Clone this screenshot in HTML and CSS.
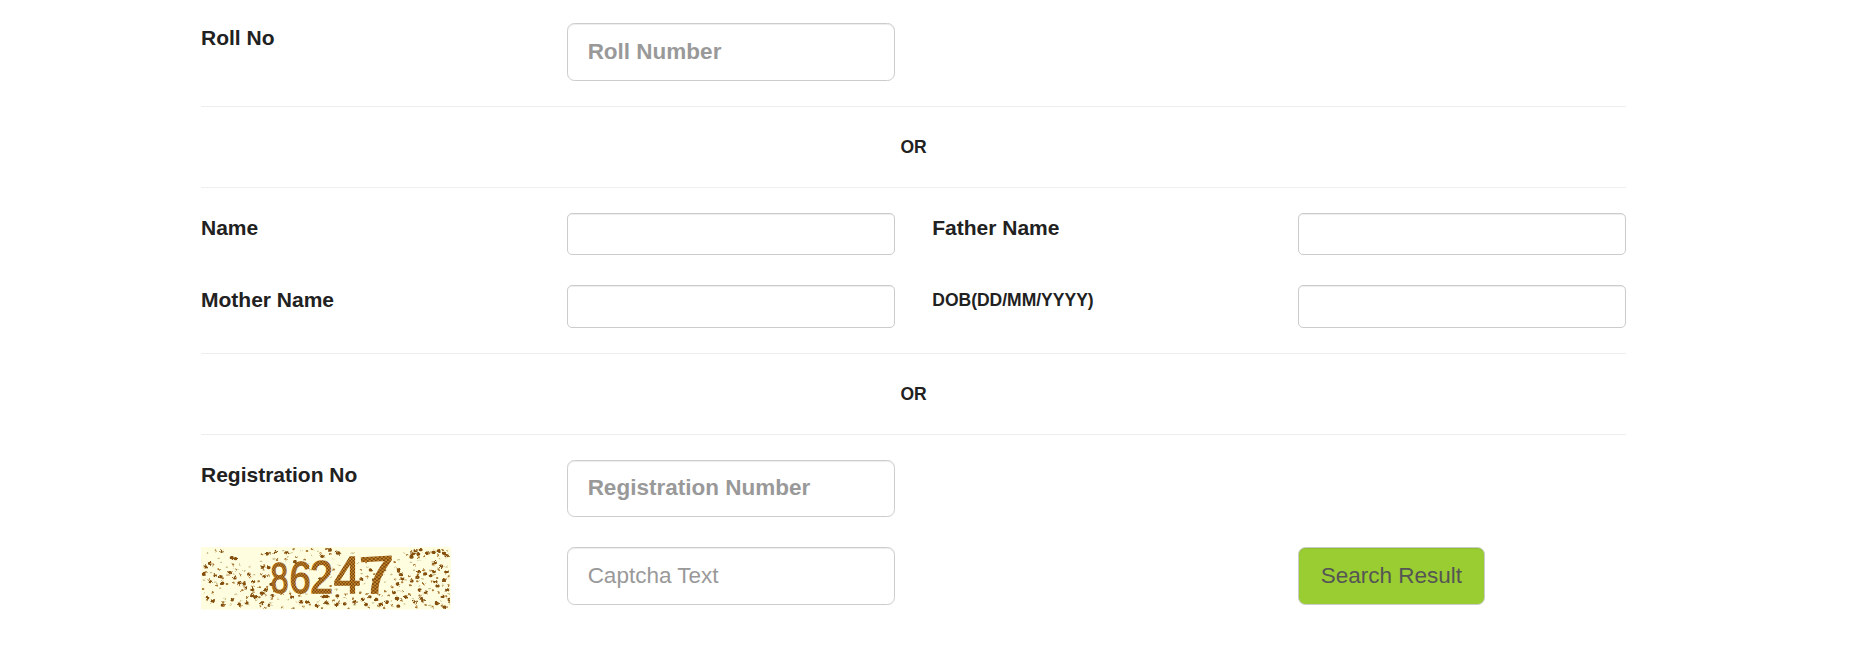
FILE: index.html
```html
<!DOCTYPE html>
<html lang="en">
<head>
    <meta charset="UTF-8">
    <meta name="viewport" content="width=device-width, initial-scale=1.0">
    <title>Search Result</title>
    <link rel="stylesheet" href="styles.css">
</head>
<body>
    <form class="container">
        <div class="row">
            <label for="rollNo">Roll No</label>
            <input type="text" id="rollNo" class="form-control input-lg bold" placeholder="Roll Number">
        </div>
        <hr>
        <p class="or">OR</p>
        <hr>
        <div class="row">
            <label for="name">Name</label>
            <input type="text" id="name" class="form-control">
            <label for="fatherName">Father Name</label>
            <input type="text" id="fatherName" class="form-control">
        </div>
        <div class="row row-next">
            <label for="motherName">Mother Name</label>
            <input type="text" id="motherName" class="form-control">
            <label for="dob" class="small">DOB(DD/MM/YYYY)</label>
            <input type="text" id="dob" class="form-control">
        </div>
        <hr>
        <p class="or">OR</p>
        <hr>
        <div class="row">
            <label for="regNo">Registration No</label>
            <input type="text" id="regNo" class="form-control input-lg bold" placeholder="Registration Number">
        </div>
        <div class="row row-next">
            <svg class="captcha" viewBox="33 22 750 188" preserveAspectRatio="none">
                <defs>
                    <pattern id="weave" width="10" height="10" patternUnits="userSpaceOnUse">
                        <rect width="10" height="10" fill="#c48a30"/>
                        <path d="M0 0h5v5h-5zM5 5h5v5h-5z" fill="#7c430a"/>
                    </pattern>
                    <filter id="rough" x="0" y="0" width="100%" height="100%">
                        <feTurbulence type="fractalNoise" baseFrequency="0.2" numOctaves="2" seed="4" result="noise"/>
                        <feDisplacementMap in="SourceGraphic" in2="noise" scale="9" xChannelSelector="R" yChannelSelector="G"/>
                    </filter>
                </defs>
                <rect x="33" y="22" width="750" height="188" fill="#fffde0"/>
                <g filter="url(#rough)">
                    <!-- faint specks -->
                    <path class="speck-light" d="M52 41h3M84 56h4M92 68h3M109 83h3M61 99h4M40 122h3M74 128h4M89 146h3M43 161h3M102 177h4M121 194h3M130 103h4M148 76h3M161 93h4M177 82h3M191 105h3M219 91h3M211 65h4M230 47h3M249 58h4M278 33h3M292 52h3M304 40h4M333 33h3M361 47h4M344 77h3M359 91h4M383 35h4M402 52h3M429 57h3M447 77h4M422 113h3M438 149h4M462 174h3M413 195h4M382 187h3M347 163h4M318 187h3M292 180h4M263 179h3M239 190h4M222 159h3M197 183h4M173 195h3M149 184h4M137 164h3M486 39h4M502 71h3M513 102h4M521 132h3M530 82h4M584 128h3M602 105h4M617 85h3M624 60h4M641 40h3M661 68h4M687 62h3M710 36h4M726 67h3M748 57h4M770 33h3M767 82h4M731 105h3M696 118h4M671 92h3M645 121h4M621 153h3M604 184h4M576 171h3M547 190h4M520 180h3M493 196h4M642 193h3M667 178h4M697 164h3M719 198h4M752 184h3M774 162h4M757 137h3M716 147h4M686 139h3"/>
                    <!-- medium specks -->
                    <path class="speck" d="M76 35h1M68 75h2M46 98h1M55 118h2M85 88h2M97 116h2M81 138h1M38 148h2M68 159h1M99 188h2M51 181h1M110 133h2M129 75h1M137 90h2M112 106h1M151 107h2M163 127h1M132 129h2M180 113h1M205 125h2M222 77h1M213 103h2M234 107h2M249 92h1M251 122h2M231 142h1M208 143h2M187 140h1M156 152h2M147 137h1M171 173h2M150 199h2M190 158h1M207 173h2M226 167h1M250 155h2M244 178h2M275 163h1M225 205h2M210 200h1M276 204h2M310 206h1M339 201h2M359 195h1M327 169h2M300 162h1M395 206h2M430 183h2M466 163h1M446 188h2M475 207h1M350 34h2M310 29h1M365 28h2M391 41h1M408 28h2M421 43h1M449 42h2M463 83h1M430 90h2M444 111h1M421 139h2M489 177h1M510 159h2M530 163h1M556 153h2M568 166h1M585 156h2M512 91h1M528 68h2M532 111h1M552 104h2M596 63h1M584 92h2M613 67h1M625 97h2M615 120h1M606 143h2M651 46h1M662 34h2M686 53h1M672 76h2M702 50h1M718 41h2M735 36h1M756 31h2M744 47h1M776 49h2M728 75h2M745 89h1M765 99h2M721 93h1M701 92h2M683 105h1M657 110h2M636 128h1M659 137h2M681 125h2M700 133h1M724 126h2M741 115h1M765 119h2M776 110h1M774 137h2M728 152h1M744 158h2M708 159h2M688 168h1M657 164h2M638 155h1M633 182h2M606 198h1M582 205h2M564 199h2M536 204h1M595 168h2M678 203h2M706 196h1M727 202h2M755 199h1M777 188h2M769 170h1M215 44h2M239 39h1M260 61h2M285 40h2M286 59h1M318 52h2M343 60h2"/>
                    <!-- heavy specks -->
                    <path class="speck-dark" d="M124 54h3M136 57h1M95 35h1M58 71h2M46 82h1M40 104h2M118 99h3M134 115h1M95 131h3M91 111h1M75 108h1M60 126h1M147 130h3M161 133h2M188 126h3M176 104h1M166 145h2M186 150h2M214 161h3M227 152h1M194 172h3M185 168h1M169 190h2M146 194h2M97 197h3M66 184h4M52 174h1M126 181h1M215 190h3M246 168h2M237 197h2M254 38h2M229 42h3M216 83h2M235 84h2M222 111h1M243 134h2M289 39h2M314 66h2M352 80h1M331 187h4M350 187h3M305 173h2M379 198h2M407 190h3M399 171h3M410 171h1M438 195h3M441 169h2M492 188h3M463 193h2M517 180h3M539 172h1M557 180h3M571 195h3M527 195h2M590 187h2M619 177h4M611 159h2M624 200h2M646 172h3M673 187h3M692 176h2M706 158h2M688 151h2M698 184h2M739 192h3M762 203h3M777 180h1M757 171h2M770 151h3M741 139h3M761 122h2M735 126h3M704 103h3M721 108h2M686 96h2M681 113h3M664 124h2M631 105h3M636 118h2M625 91h2M622 133h2M666 43h4M675 33h3M663 52h3M691 30h2M684 43h2M709 41h3M729 38h3M745 34h2M761 41h3M768 48h3M734 69h2M752 80h3M731 96h2M770 96h2M442 40h4M419 31h2M396 50h1M414 104h2M390 118h2M487 128h3M513 118h2M541 91h3M551 120h2M574 104h1"/>
                </g>
                <g class="digits" fill="url(#weave)" stroke="url(#weave)">
                    <text transform="translate(244 160) rotate(-2) scale(.74 1)" font-size="128">8</text>
                    <text transform="translate(297 159) rotate(2) scale(.86 1)" font-size="134">6</text>
                    <text transform="translate(360 159) scale(.9 1)" font-size="138">2</text>
                    <text transform="translate(431 161) scale(.94 1)" font-size="154">4</text>
                    <text transform="translate(511 163) rotate(-3) scale(1.22 1)" font-size="158">7</text>
                </g>
            </svg>
            <input type="text" id="captcha" class="form-control input-lg" placeholder="Captcha Text">
            <button type="button" class="btn">Search Result</button>
        </div>
    </form>
</body>
</html>
```

FILE: styles.css
```css
* {
    box-sizing: border-box;
}
body {
    margin: 0;
    background: #fff;
    color: #212121;
    font-family: "Liberation Sans", Arial, sans-serif;
    font-size: 17.5px;
    line-height: 25px;
}
.container {
    width: 1425px;
    margin-left: 201px;
    padding-top: 23px;
}
.row {
    display: grid;
    grid-template-columns: repeat(4, 1fr);
    column-gap: 37.5px;
    align-items: start;
}
.row-next {
    margin-top: 30px;
}
label {
    font-size: 21px;
    font-weight: bold;
    padding-top: 2px;
}
label.small {
    font-size: 17.5px;
    padding-top: 3px;
}
hr {
    height: 1px;
    margin: 25px 0;
    border: none;
    background: #eee;
}
.or {
    margin: 0;
    padding: 3px 0 2px;
    text-align: center;
    font-weight: bold;
}
.form-control {
    width: 100%;
    height: 42.5px;
    padding: 7px 15px;
    border: 1px solid #ccc;
    border-radius: 5px;
    box-shadow: inset 0 1px 1px rgba(0, 0, 0, 0.075);
    background: #fff;
    font-family: inherit;
    font-size: 17.5px;
}
.input-lg {
    height: 57.5px;
    padding: 12.5px 20px;
    border-radius: 7.5px;
    font-size: 22.5px;
}
.bold {
    font-weight: bold;
}
.form-control::placeholder {
    color: #999;
}
.captcha {
    display: block;
    width: 250px;
    height: 62.5px;
}
.speck-light,
.speck,
.speck-dark {
    fill: none;
    stroke-linecap: round;
}
.speck-light {
    stroke: #c9c08c;
    stroke-width: 4;
}
.speck {
    stroke: #a87a35;
    stroke-width: 6;
}
.speck-dark {
    stroke: #84500f;
    stroke-width: 10;
}
.digits {
    font-family: "Liberation Sans", Arial, sans-serif;
    stroke-width: 4;
}
.btn {
    grid-column: 4;
    width: 187px;
    height: 57.5px;
    padding: 0;
    border: 1px solid #ccc;
    border-radius: 7.5px;
    box-shadow: inset 0 1px 1px rgba(0, 0, 0, 0.075);
    background: yellowgreen;
    color: #555;
    font-family: inherit;
    font-size: 22.5px;
    cursor: pointer;
}
```
